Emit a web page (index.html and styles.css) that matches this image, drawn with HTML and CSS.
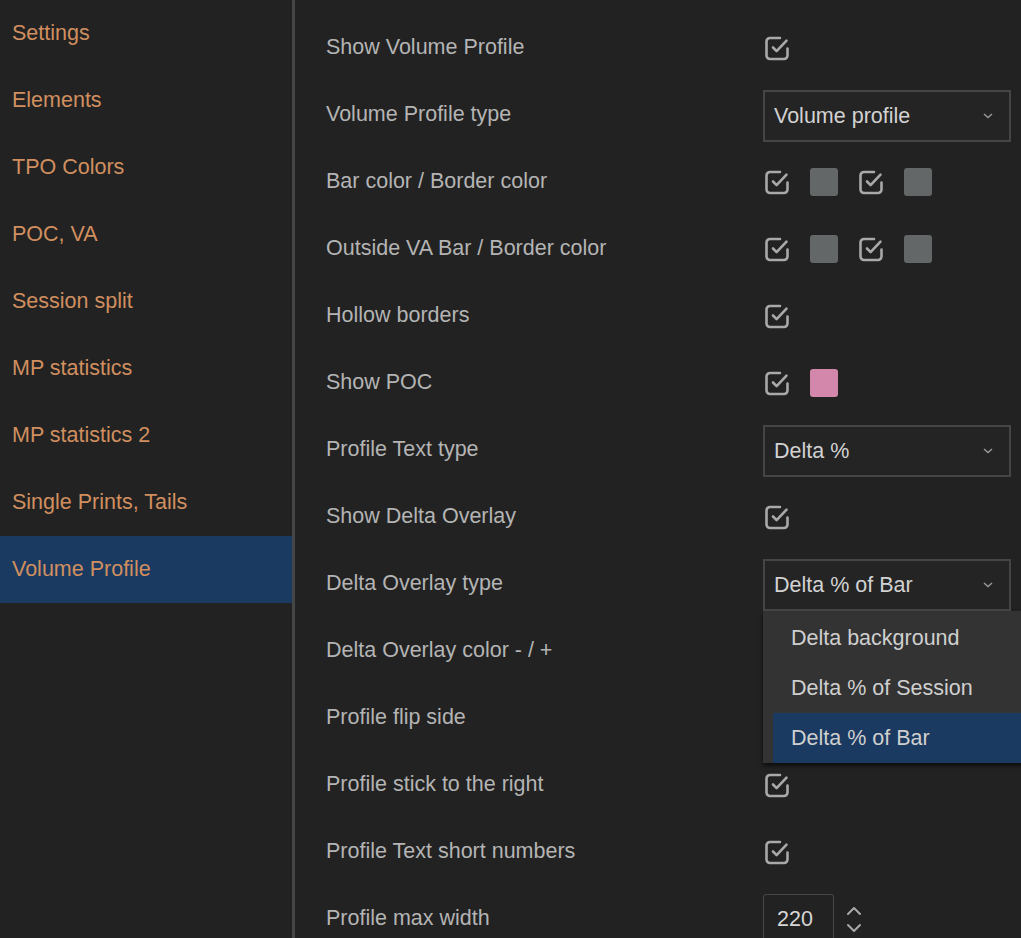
FILE: index.html
```html
<!DOCTYPE html>
<html>
<head>
<meta charset="utf-8">
<link rel="stylesheet" href="styles.css">
</head>
<body>
<svg width="0" height="0" class="defs">
  <defs>
    <symbol id="chk" viewBox="0 0 28 28">
      <path d="M24.5 14.5v7a3.5 3.5 0 0 1-3.5 3.5h-14a3.5 3.5 0 0 1-3.5-3.5v-14a3.5 3.5 0 0 1 3.5-3.5h10" fill="none" stroke="currentColor" stroke-width="2.6" stroke-linecap="round" stroke-linejoin="round"/>
      <path d="M10 13.5l3.6 3.6 9.9-10.4" fill="none" stroke="currentColor" stroke-width="2.6" stroke-linecap="round" stroke-linejoin="round"/>
    </symbol>
  </defs>
</svg>
<div class="app">
  <nav class="sidebar">
    <div class="nav-item">Settings</div>
    <div class="nav-item">Elements</div>
    <div class="nav-item">TPO Colors</div>
    <div class="nav-item">POC, VA</div>
    <div class="nav-item">Session split</div>
    <div class="nav-item">MP statistics</div>
    <div class="nav-item">MP statistics 2</div>
    <div class="nav-item">Single Prints, Tails</div>
    <div class="nav-item active">Volume Profile</div>
  </nav>
  <main class="content">
    <div class="row">
      <div class="label">Show Volume Profile</div>
      <div class="ctrl"><svg class="cb"><use href="#chk"/></svg></div>
    </div>
    <div class="row">
      <div class="label">Volume Profile type</div>
      <div class="ctrl">
        <div class="select"><span>Volume profile</span><svg class="chev" viewBox="0 0 10 6"><path d="M1 1l4 3.5L9 1" fill="none" stroke="currentColor" stroke-width="1.4"/></svg></div>
      </div>
    </div>
    <div class="row">
      <div class="label">Bar color / Border color</div>
      <div class="ctrl">
        <svg class="cb"><use href="#chk"/></svg>
        <span class="swatch gray"></span>
        <svg class="cb"><use href="#chk"/></svg>
        <span class="swatch gray"></span>
      </div>
    </div>
    <div class="row">
      <div class="label">Outside VA Bar / Border color</div>
      <div class="ctrl">
        <svg class="cb"><use href="#chk"/></svg>
        <span class="swatch gray"></span>
        <svg class="cb"><use href="#chk"/></svg>
        <span class="swatch gray"></span>
      </div>
    </div>
    <div class="row">
      <div class="label">Hollow borders</div>
      <div class="ctrl"><svg class="cb"><use href="#chk"/></svg></div>
    </div>
    <div class="row">
      <div class="label">Show POC</div>
      <div class="ctrl">
        <svg class="cb"><use href="#chk"/></svg>
        <span class="swatch pink"></span>
      </div>
    </div>
    <div class="row">
      <div class="label">Profile Text type</div>
      <div class="ctrl">
        <div class="select"><span>Delta %</span><svg class="chev" viewBox="0 0 10 6"><path d="M1 1l4 3.5L9 1" fill="none" stroke="currentColor" stroke-width="1.4"/></svg></div>
      </div>
    </div>
    <div class="row">
      <div class="label">Show Delta Overlay</div>
      <div class="ctrl"><svg class="cb"><use href="#chk"/></svg></div>
    </div>
    <div class="row">
      <div class="label">Delta Overlay type</div>
      <div class="ctrl">
        <div class="select open"><span>Delta % of Bar</span><svg class="chev" viewBox="0 0 10 6"><path d="M1 1l4 3.5L9 1" fill="none" stroke="currentColor" stroke-width="1.4"/></svg>
          <div class="menu">
            <div class="menu-item">Delta background</div>
            <div class="menu-item">Delta % of Session</div>
            <div class="menu-item selected">Delta % of Bar</div>
          </div>
        </div>
      </div>
    </div>
    <div class="row">
      <div class="label">Delta Overlay color - / +</div>
      <div class="ctrl"></div>
    </div>
    <div class="row">
      <div class="label">Profile flip side</div>
      <div class="ctrl"></div>
    </div>
    <div class="row">
      <div class="label">Profile stick to the right</div>
      <div class="ctrl"><svg class="cb"><use href="#chk"/></svg></div>
    </div>
    <div class="row">
      <div class="label">Profile Text short numbers</div>
      <div class="ctrl"><svg class="cb"><use href="#chk"/></svg></div>
    </div>
    <div class="row">
      <div class="label">Profile max width</div>
      <div class="ctrl">
        <div class="num">220</div>
        <div class="spin">
          <svg viewBox="0 0 20 30"><path d="M4 10l6-6 6 6M4 21l6 6 6-6" fill="none" stroke="currentColor" stroke-width="2" stroke-linecap="round" stroke-linejoin="round"/></svg>
        </div>
      </div>
    </div>
  </main>
</div>
</body>
</html>
```
FILE: styles.css
```css
html, body {
  margin: 0;
  padding: 0;
  background: #222222;
  overflow: hidden;
}
body {
  font-family: "Liberation Sans", Arial, sans-serif;
  font-size: 21.5px;
  width: 1021px;
  height: 938px;
}
.defs {
  position: absolute;
  width: 0;
  height: 0;
}
.app {
  display: flex;
  height: 938px;
}
.sidebar {
  width: 292px;
  flex: none;
  border-right: 3px solid #464646;
  display: flex;
  flex-direction: column;
}
.nav-item {
  height: 67px;
  display: flex;
  align-items: center;
  padding-left: 12px;
  color: #d18f60;
}
.nav-item.active {
  background: #1b3a61;
}
.content {
  flex: 1;
  padding-top: 14px;
  padding-left: 31px;
  display: flex;
  flex-direction: column;
}
.row {
  height: 67px;
  flex: none;
  display: flex;
  align-items: center;
}
.label {
  width: 437px;
  flex: none;
  color: #b4b4b4;
}
.ctrl {
  display: flex;
  align-items: center;
  gap: 19px;
}
.cb {
  width: 28px;
  height: 28px;
  color: #a9a9a9;
  display: block;
}
.swatch {
  width: 28px;
  height: 28px;
  border-radius: 3px;
  display: block;
}
.swatch.gray { background: #636767; }
.swatch.pink { background: #d388ab; }
.select {
  position: relative;
  height: 48px;
  border: 2px solid #454545;
  background: #242424;
  display: flex;
  align-items: center;
  justify-content: space-between;
  padding: 0 16px 0 9px;
  box-sizing: content-box;
  color: #d2d2d2;
  width: 219px;
  margin-top: 3px;
}
.chev {
  width: 10px;
  height: 6px;
  color: #9a9a9a;
}
.menu {
  position: absolute;
  top: 100%;
  left: -2px;
  width: 260px;
  background: #333333;
  padding: 2px 0 0 10px;
  box-shadow: 0 3px 4px rgba(0,0,0,0.6);
  margin-top: 2px;
  z-index: 5;
}
.menu-item {
  height: 50px;
  display: flex;
  align-items: center;
  padding-left: 18px;
  color: #cfcfcf;
}
.menu-item.selected {
  background: #1b3a61;
}
.num {
  width: 56px;
  height: 48px;
  border: 1.5px solid #474747;
  border-radius: 3px;
  display: flex;
  align-items: center;
  padding-left: 13px;
  color: #d6d6d6;
  margin-top: 1px;
}
.spin {
  margin-left: -9px;
  color: #a9a9a9;
}
.spin svg {
  width: 20px;
  height: 30px;
  display: block;
}
```
